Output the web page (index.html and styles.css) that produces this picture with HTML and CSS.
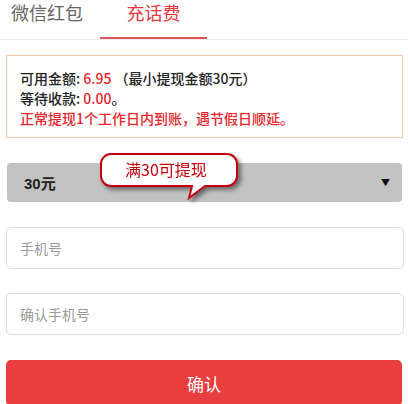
FILE: index.html
```html
<!DOCTYPE html>
<html lang="zh-CN">

<head>
  <title>提现</title>
  <meta charset="utf-8">
  <meta name="viewport" content="width=device-width, initial-scale=1">

  <link rel="stylesheet" href="styles.css">
</head>

<body>

  <div class="tabs">
    <div class="tab">微信红包</div>
    <div class="tab active">充话费</div>
  </div>

  <div class="content">

    <div class="notice">
      <div class="line">可用金额: <span class="red">6.95</span> （最小提现金额30元）</div>
      <div class="line">等待收款: <span class="red">0.00</span>。</div>
      <div class="line red">正常提现1个工作日内到账，遇节假日顺延。</div>
    </div>

    <div class="select-wrap">
      <div class="select">
        <span class="select-val">30元</span>
        <span class="select-arrow">&#9660;</span>
      </div>

      <svg class="bubble" width="145" height="52" viewBox="0 0 145 52">
        <path d="M13,2 H129 A10,10 0 0 1 139,12 V24 A10,10 0 0 1 129,34 H107 L91,46 L94,34 H13 A10,10 0 0 1 3,24 V12 A10,10 0 0 1 13,2 Z"
              fill="#fff" stroke="#c40010" stroke-width="2"/>
        <text x="68" y="24" text-anchor="middle" class="bubble-text">满30可提现</text>
      </svg>
    </div>

    <input class="field" type="text" placeholder="手机号">
    <input class="field" type="text" placeholder="确认手机号">

    <button class="btn">确认</button>

  </div>

</body>

</html>
```

FILE: styles.css
```css
    body {
      margin: 0;
      width: 408px;
      background: #fff;
      font-family: "Noto Sans CJK SC", "Noto Sans", sans-serif;
      color: #333;
    }

    .tabs {
      display: flex;
      border-bottom: 1px solid #ececec;
    }

    .tab {
      height: 37px;
      line-height: 25px;
      font-size: 18px;
      color: #666;
      text-align: center;
      border-bottom: 2px solid transparent;
    }

    .tab:first-child {
      width: 94px;
    }

    .tab.active {
      width: 107px;
      margin-left: 6px;
      color: #e0393e;
      border-bottom-color: #e05558;
    }

    .content {
      padding: 0 5px 0 6px;
    }

    .notice {
      margin-top: 15px;
      border: 1px solid #f3c9ad;
      padding: 12px 13px 9px;
      font-size: 14px;
      font-weight: 500;
      line-height: 20px;
      color: #222;
    }

    .red {
      color: #e8262b;
    }

    .select-wrap {
      position: relative;
      margin-top: 25px;
    }

    .select {
      display: flex;
      align-items: center;
      justify-content: space-between;
      height: 39px;
      margin: 0 1px;
      padding: 0 12px 0 17px;
      background: #c2c2c2;
      border-radius: 4px;
    }

    .select-val {
      font-size: 15px;
      font-weight: bold;
      color: #222;
      font-family: "Liberation Sans", "Noto Sans CJK SC", sans-serif;
    }

    .select-arrow {
      font-size: 9px;
      color: #111;
    }

    .bubble {
      position: absolute;
      left: 92px;
      top: -11px;
      filter: drop-shadow(3px 3px 2px rgba(0, 0, 0, 0.45));
    }

    .bubble-text {
      font-size: 16px;
      fill: #c8000c;
      font-family: "Noto Sans CJK SC", sans-serif;
    }

    .field {
      display: block;
      box-sizing: border-box;
      width: 398px;
      height: 42px;
      margin-top: 25px;
      padding: 0 13px;
      border: 1px solid #dcdcdc;
      border-radius: 5px;
      font-size: 14px;
      font-family: "Noto Sans CJK SC", sans-serif;
      outline: none;
    }

    .field + .field {
      margin-top: 24px;
    }

    .field::placeholder {
      color: #9a9a9a;
    }

    .btn {
      display: block;
      width: 396px;
      height: 46px;
      margin-top: 25px;
      border: 0;
      border-radius: 5px;
      background: #e83e3e;
      color: #fff;
      font-size: 17px;
      font-family: "Noto Sans CJK SC", sans-serif;
    }
```
